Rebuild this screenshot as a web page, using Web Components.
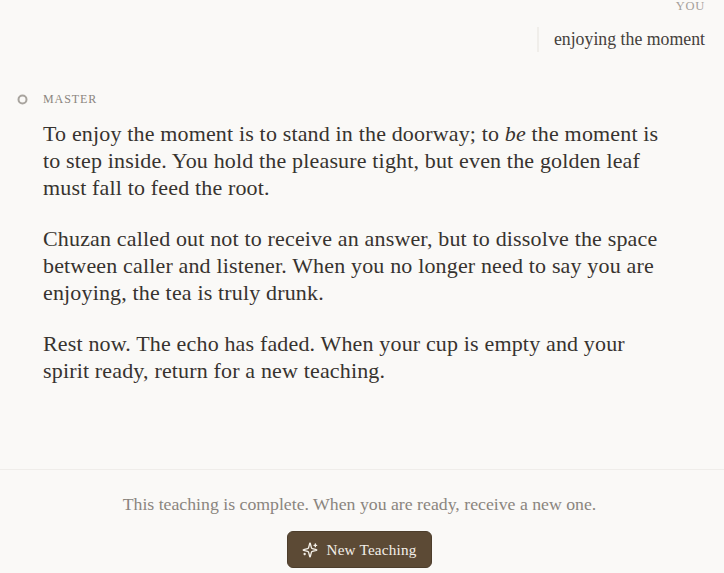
<!DOCTYPE html>
<html><head><meta charset="utf-8"><style>
html,body{margin:0;height:100%;overflow:hidden}
body{background:#faf9f7;font-family:"Liberation Serif",serif;color:#37332f}
</style></head><body>
<app-shell>
<user-message label="YOU">enjoying the moment</user-message>
<master-message label="MASTER">
<p>To enjoy the moment is to stand in the doorway; to <em>be</em> the moment is to step inside. You hold the pleasure tight, but even the golden leaf must fall to feed the root.</p>
<p>Chuzan called out not to receive an answer, but to dissolve the space between caller and listener. When you no longer need to say you are enjoying, the tea is truly drunk.</p>
<p>Rest now. The echo has faded. When your cup is empty and your spirit ready, return for a new teaching.</p>
</master-message>
<end-bar slot="footer" text="This teaching is complete. When you are ready, receive a new one." action="New Teaching"></end-bar>
</app-shell>
<script>
function def(name,html,init){customElements.define(name,class extends HTMLElement{constructor(){super();const s=this.attachShadow({mode:"open"});s.innerHTML=html;}connectedCallback(){init&&init(this,this.shadowRoot)}})}
def("app-shell",`<style>:host{display:flex;flex-direction:column;height:573px;overflow:hidden}
main{flex:1;min-height:0;overflow:hidden;display:flex;flex-direction:column;gap:39px}</style><main><slot></slot></main><slot name="footer"></slot>`);
def("user-message",`<style>:host{display:flex;flex-direction:column;align-items:flex-end;padding:0 19px 0 0;gap:14px}
.l{font-size:12.5px;letter-spacing:.7px;color:#a5a09a;line-height:13px}
.b{border-left:2px solid #f0eeea;padding-left:15px;font-size:17.8px;line-height:25px;color:#45413c}</style><div class="l"></div><div class="b"><slot></slot></div>`,(e,s)=>{s.querySelector(".l").textContent=e.getAttribute("label")});
def("master-message",`<style>:host{display:block;padding:0 56px 0 17px}
.h{display:flex;align-items:center;gap:15px;font-size:12px;letter-spacing:.9px;color:#8a857e;line-height:16px;margin-bottom:13px}
svg{width:11px;height:11px;display:block}
.c{margin-left:26px;font-size:22px;line-height:27px;letter-spacing:.16px;color:#37332f}
::slotted(p){margin:0 0 24px}</style><div class="h"><svg viewBox="0 0 11 11"><circle cx="5.5" cy="5.5" r="4" fill="none" stroke="#a8a49e" stroke-width="2"/></svg><span class="t"></span></div><div class="c"><slot></slot></div>`,(e,s)=>{s.querySelector(".t").textContent=e.getAttribute("label")});
def("end-bar",`<style>:host{display:flex;flex-direction:column;align-items:center;border-top:1px solid #efedea;padding:23px 5px 5px 0;gap:16px}
.t{font-size:17.75px;line-height:22px;color:#8a857e}
button{display:flex;align-items:center;gap:8px;height:37px;width:145px;justify-content:center;box-sizing:border-box;background:#5c4a35;border:1px solid #4d3e2c;border-radius:6px;color:#f3efe8;font:15.2px "Liberation Serif",serif;letter-spacing:.2px;padding:0}
svg{width:16px;height:16px}</style><div class="t"></div><button><svg viewBox="0 0 24 24" fill="none" stroke="#f3efe8" stroke-width="2" stroke-linecap="round" stroke-linejoin="round"><path d="M9.9 15.5A2 2 0 0 0 8.5 14.1L2.4 12.5a.5.5 0 0 1 0-1L8.5 9.9A2 2 0 0 0 9.9 8.5l1.6-6.1a.5.5 0 0 1 1 0l1.6 6.1a2 2 0 0 0 1.4 1.4l6.1 1.6a.5.5 0 0 1 0 1l-6.1 1.6a2 2 0 0 0-1.4 1.4l-1.6 6.1a.5.5 0 0 1-1 0z"/><path d="M20 3v4M22 5h-4M4 17v2M5 18H3"/></svg><span class="a"></span></button>`,(e,s)=>{s.querySelector(".t").textContent=e.getAttribute("text");s.querySelector(".a").textContent=e.getAttribute("action")});
</script>
</body></html>
